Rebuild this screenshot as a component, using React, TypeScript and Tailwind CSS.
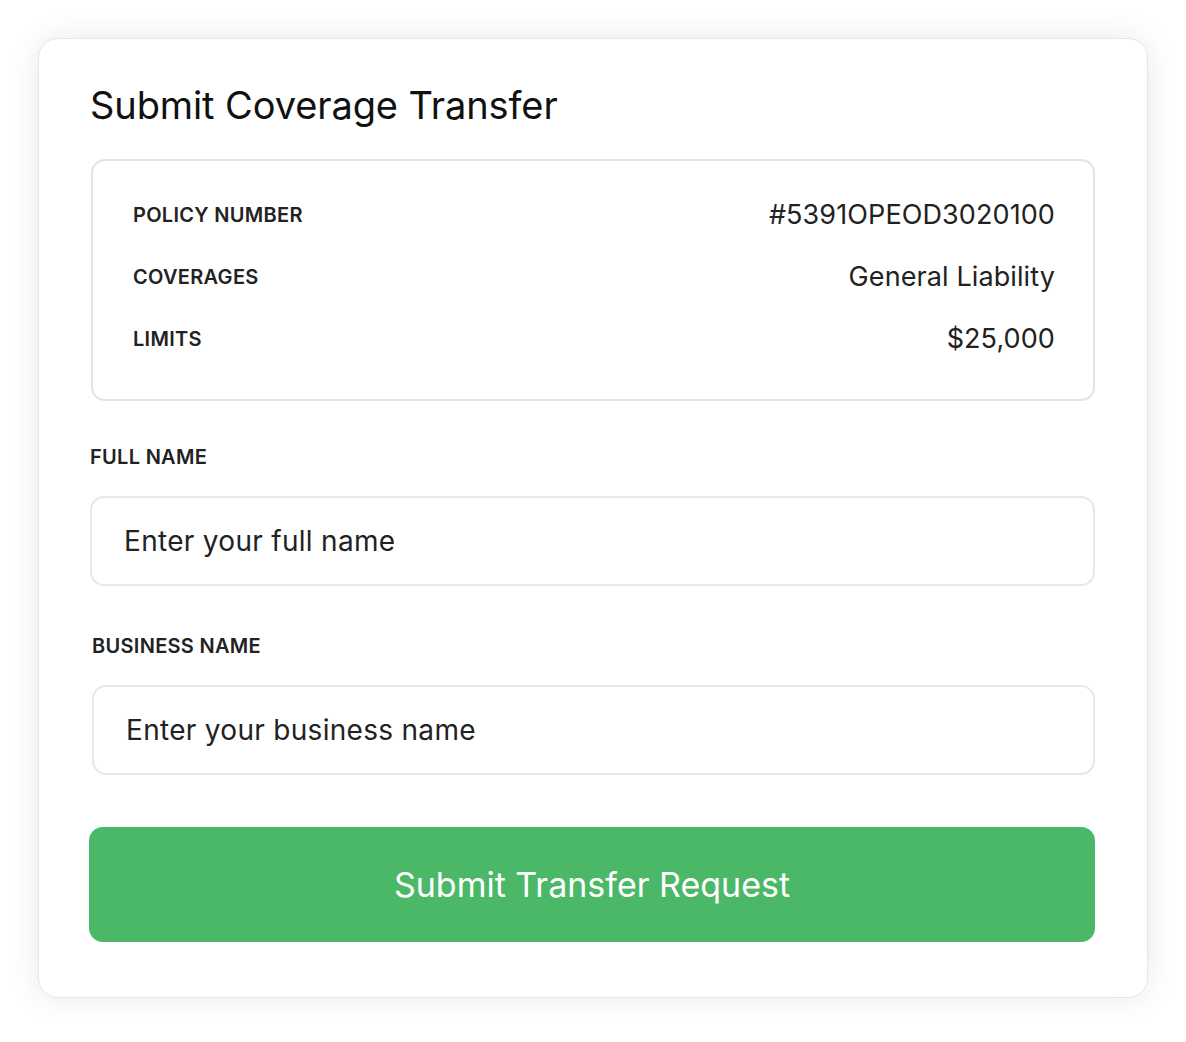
const rows = [
  { label: "POLICY NUMBER", value: "#5391OPEOD3020100" },
  { label: "COVERAGES", value: "General Liability" },
  { label: "LIMITS", value: "$25,000" },
];

export default function App() {
  return (
    <div className="min-h-screen bg-white pt-[38px] pl-[38px] font-['Inter',sans-serif]">
      {/* card */}
      <div className="w-[1110px] rounded-[20px] border border-[#e4e6e8] bg-white px-[51px] pt-[43px] pb-[55px] shadow-[0_0_32px_rgba(0,0,0,0.09)]">
        <h1 className="text-[38px] leading-[46px] text-[#111] tracking-[-0.1px]">
          Submit Coverage Transfer
        </h1>

        {/* policy summary */}
        <div className="mt-[31px] ml-[1px] w-[1004px] rounded-[14px] border-2 border-[#dfe4e6] pl-[40px] pr-[38px] pt-[34px] pb-[40px]">
          <div className="flex flex-col gap-[22px]">
            {rows.map((row) => (
              <div key={row.label} className="flex h-[40px] items-center justify-between">
                <span className="text-[20px] tracking-[0.3px] font-semibold text-[#222]">{row.label}</span>
                <span className="text-[27px] tracking-[0.1px] text-[#222]">{row.value}</span>
              </div>
            ))}
          </div>
        </div>

        {/* full name */}
        <label className="mt-[44px] block text-[20px] tracking-[0.3px] leading-[24px] font-semibold text-[#222]">
          FULL NAME
        </label>
        <div className="mt-[27px] flex h-[90px] w-[1005px] items-center rounded-[14px] border-2 border-[#e8e8e8] px-[32px]">
          <span className="text-[28px] tracking-[0.3px] text-[#222]">Enter your full name</span>
        </div>

        {/* business name */}
        <label className="mt-[48px] ml-[2px] block text-[20px] tracking-[0.3px] leading-[24px] font-semibold text-[#222]">
          BUSINESS NAME
        </label>
        <div className="mt-[27px] ml-[2px] flex h-[90px] w-[1003px] items-center rounded-[14px] border-2 border-[#e8e8e8] px-[32px]">
          <span className="text-[28px] tracking-[0.3px] text-[#222]">Enter your business name</span>
        </div>

        <button className="mt-[52px] -ml-[1px] flex h-[115px] w-[1006px] items-center justify-center rounded-[14px] bg-[#4ab866] text-[34px] text-white">
          Submit Transfer Request
        </button>
      </div>
    </div>
  );
}
